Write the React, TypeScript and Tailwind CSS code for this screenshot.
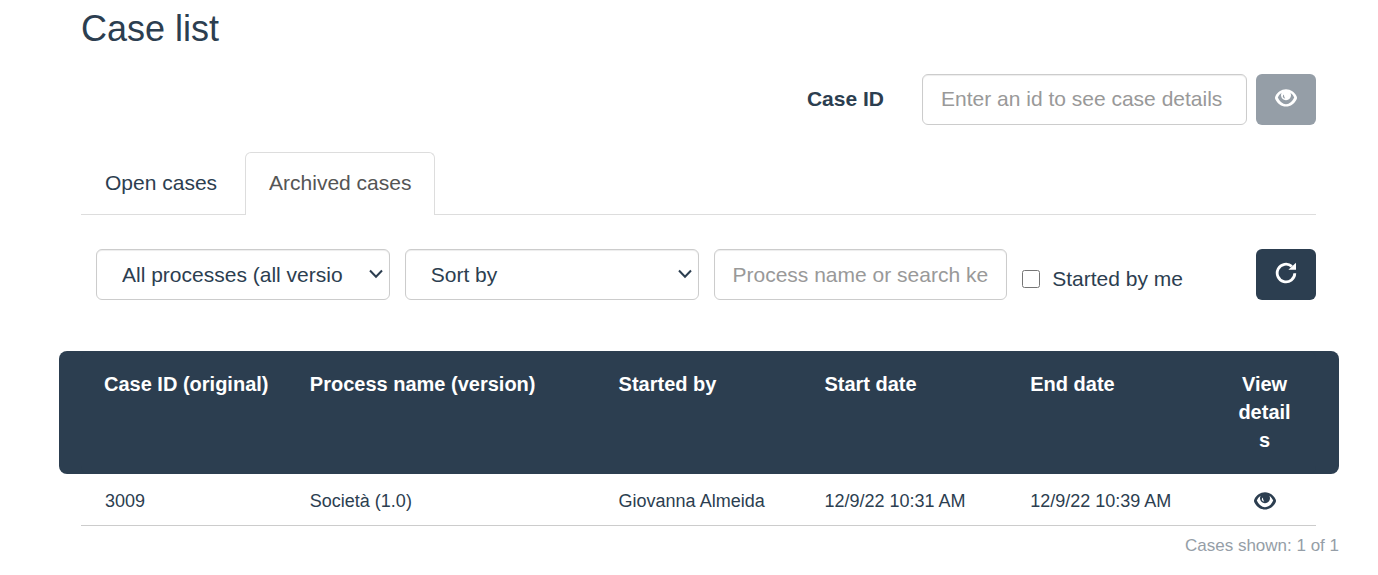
import React from 'react';

const fieldClass =
  'h-[51px] w-full rounded-md border border-[#cccccc] bg-white text-[21px] shadow-[inset_0_1px_1px_rgba(0,0,0,0.075)] placeholder:text-[#999999] placeholder:opacity-100';

function EyeIcon({ className }: { className?: string }) {
  return (
    <svg className={className} width="22" height="18" viewBox="0 0 22 18" fill="currentColor" aria-hidden="true">
      <path
        fillRule="evenodd"
        d="M11 0.3C6.2 0.3 2.4 3.2 0.3 7.4Q-0.3 8.8 0.3 10.2C2.4 14.6 6.2 17.5 11 17.5S19.6 14.6 21.7 10.2Q22.3 8.8 21.7 7.4C19.6 3.2 15.8 0.3 11 0.3ZM6.6 3.8A5 5 0 1 0 15.4 3.8Q17.8 5.4 19.2 8.6Q16.2 15.2 11 15.2T2.8 8.6Q4.2 5.4 6.6 3.8ZM9 5.6Q7.6 6.4 7.9 8Q8.6 9.6 10.3 9.4Q8.8 8 9 5.6Z"
      />
    </svg>
  );
}

function RepeatIcon() {
  return (
    <svg width="22" height="22" viewBox="0 0 22 22" aria-hidden="true">
      <path d="M19.8 11.2A8.8 8.8 0 1 1 16.8 4.4" fill="none" stroke="currentColor" strokeWidth="2.8" />
      <path d="M21 0.8V7.8H13.4Z" fill="currentColor" />
    </svg>
  );
}

function Select({ label, options }: { label: string; options: string[] }) {
  return (
    <div className="relative">
      <select aria-label={label} className={`${fieldClass} appearance-none pr-[46px] pl-[25px]`}>
        {options.map((option) => (
          <option key={option}>{option}</option>
        ))}
      </select>
      <svg
        className="pointer-events-none absolute top-5 right-[7px]"
        width="14"
        height="10"
        viewBox="0 0 14 10"
        fill="none"
        stroke="currentColor"
        strokeWidth="2"
        aria-hidden="true"
      >
        <path d="M1 1.5L7 7.8L13 1.5" />
      </svg>
    </div>
  );
}

const columns = [
  { title: 'Case ID (original)', width: 'w-2/12' },
  { title: 'Process name (version)', width: 'w-3/12' },
  { title: 'Started by', width: 'w-2/12' },
  { title: 'Start date', width: 'w-2/12' },
  { title: 'End date', width: 'w-2/12' },
];

const cases = [
  {
    id: '3009',
    process: 'Società (1.0)',
    startedBy: 'Giovanna Almeida',
    start: '12/9/22 10:31 AM',
    end: '12/9/22 10:39 AM',
  },
];

const headCell = 'bg-[#2c3e50] pt-[19px] pb-5 pl-[23px] align-top font-bold';
const bodyCell = 'h-[52px] border-b border-[#cccccc] pt-0.5 pl-[23px]';

export default function App() {
  return (
    <main className="bg-white pt-[9px] pr-[39px] pb-4 pl-[59px] font-['Liberation_Sans',Arial,sans-serif] text-[21px] leading-[30px] text-[#2c3e50]">
      <div className="pr-[23px] pl-[22px]">
        <h1 className="text-4xl leading-10">Case list</h1>

        <form className="mt-[25px] flex items-center justify-end" onSubmit={(e) => e.preventDefault()}>
          <label htmlFor="case-id" className="mr-[38px] pb-0.5 font-bold">
            Case ID
          </label>
          <div className="mr-[9px] w-[325px]">
            <input id="case-id" type="text" placeholder="Enter an id to see case details" className={`${fieldClass} px-[18px] pb-0.5`} />
          </div>
          <button
            type="submit"
            disabled
            aria-label="View case"
            className="flex h-[51px] w-[60px] items-center justify-center rounded-md bg-[#959ea7] pb-1 text-white"
          >
            <EyeIcon />
          </button>
        </form>

        <nav className="mt-[27px] flex border-b border-[#dddddd]">
          <a href="#open" className="mr-1 px-6 py-4">
            Open cases
          </a>
          <a
            href="#archived"
            aria-current="page"
            className="-mb-px rounded-t-md border border-b-0 border-[#dddddd] bg-white px-[23px] pt-[15px] pb-[17px] text-[#555555]"
          >
            Archived cases
          </a>
        </nav>

        <div className="mt-[34px] grid grid-cols-4">
          <div className="pl-[15px]">
            <Select label="Process" options={['All processes (all versions)']} />
          </div>
          <div className="pl-[15px]">
            <Select label="Sort by" options={['Sort by']} />
          </div>
          <div className="pl-[15px]">
            <input
              type="text"
              aria-label="Search"
              placeholder="Process name or search key"
              className={`${fieldClass} px-[18px]`}
            />
          </div>
          <div className="flex items-start justify-between pl-[15px]">
            <label className="flex items-center gap-3 pt-[15px]">
              <input type="checkbox" className="size-[18px]" />
              Started by me
            </label>
            <button
              type="button"
              aria-label="Refresh"
              className="flex h-[51px] w-[60px] items-center justify-center rounded-md bg-[#2c3e50] pb-1 text-white"
            >
              <RepeatIcon />
            </button>
          </div>
        </div>

        <table className="mt-[51px] w-full table-fixed border-separate border-spacing-0 text-left">
          <thead className="text-xl leading-7 text-white">
            <tr>
              {columns.map((column) => (
                <th
                  key={column.title}
                  scope="col"
                  className={`${column.width} ${headCell} whitespace-nowrap first:rounded-l-lg first:shadow-[-22px_0_0_#2c3e50]`}
                >
                  {column.title}
                </th>
              ))}
              <th
                scope="col"
                className={`${headCell} w-1/12 rounded-r-lg pr-[23px] text-center wrap-break-word shadow-[23px_0_0_#2c3e50]`}
              >
                View details
              </th>
            </tr>
          </thead>
          <tbody className="text-lg">
            {cases.map((item) => (
              <tr key={item.id}>
                <td className={bodyCell}>
                  <a href="#case" className="border border-transparent">
                    {item.id}
                  </a>
                </td>
                <td className={bodyCell}>{item.process}</td>
                <td className={bodyCell}>{item.startedBy}</td>
                <td className={bodyCell}>{item.start}</td>
                <td className={bodyCell}>{item.end}</td>
                <td className={`${bodyCell} pr-[23px]`}>
                  <a href="#case" aria-label="View details" className="flex justify-center">
                    <EyeIcon />
                  </a>
                </td>
              </tr>
            ))}
          </tbody>
        </table>
      </div>
      <p className="mt-[5px] text-right text-[17px] text-[#959ea7]">Cases shown: 1 of 1</p>
    </main>
  );
}
